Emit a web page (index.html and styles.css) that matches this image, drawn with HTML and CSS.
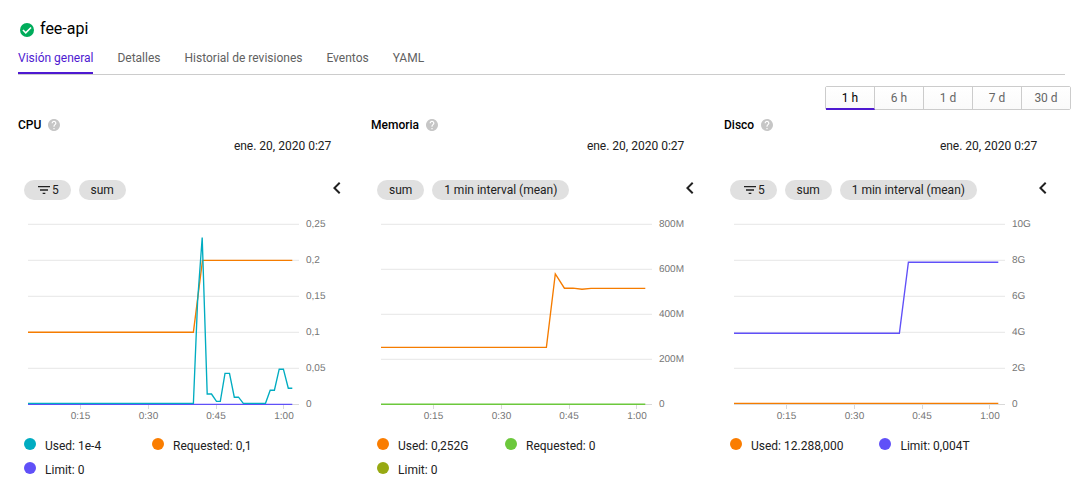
FILE: index.html
```html
<!DOCTYPE html>
<html lang="es">
<head>
<meta charset="utf-8">
<title>fee-api</title>
<link rel="stylesheet" href="styles.css">
</head>
<body>
<svg width="0" height="0" class="defs">
  <symbol id="help" viewBox="2 2 20 20"><path d="M12 2C6.48 2 2 6.48 2 12s4.48 10 10 10 10-4.48 10-10S17.52 2 12 2zm1 17h-2v-2h2v2zm2.07-7.75l-.9.92C13.45 12.9 13 13.5 13 15h-2v-.5c0-1.1.45-2.1 1.17-2.83l1.24-1.26c.37-.36.59-.86.59-1.41 0-1.1-.9-2-2-2s-2 .9-2 2H8c0-2.21 1.79-4 4-4s4 1.79 4 4c0 .88-.36 1.68-.93 2.25z"/></symbol>
  <symbol id="filter" viewBox="0 0 24 24"><path d="M10 18h4v-2h-4v2zM3 6v2h18V6H3zm3 7h12v-2H6v2z"/></symbol>
  <symbol id="chevron" viewBox="0 0 24 24"><path d="M15.41 7.41L14 6l-6 6 6 6 1.41-1.41L10.83 12z"/></symbol>
</svg>
<header class="header">
  <svg class="status" viewBox="2 2 20 20"><circle cx="12" cy="12" r="10" fill="#00ac5b"/><path d="M6.2 12l4 4 7.6-7.6" fill="none" stroke="#fff" stroke-width="2.2"/></svg>
  <h1 class="title">fee-api</h1>
</header>
<nav class="tabs">
  <a class="tab tab-active">Visión general</a>
  <a class="tab">Detalles</a>
  <a class="tab">Historial de revisiones</a>
  <a class="tab">Eventos</a>
  <a class="tab">YAML</a>
</nav>
<div class="ranges">
  <button class="range range-active">1 h</button>
  <button class="range">6 h</button>
  <button class="range">1 d</button>
  <button class="range">7 d</button>
  <button class="range">30 d</button>
</div>
<main class="panels">
  <section class="panel">
    <h2 class="heading">CPU <svg class="help"><use href="#help"/></svg></h2>
    <div class="date">ene. 20, 2020 0:27</div>
    <div class="controls">
      <span class="chip"><svg class="filter"><use href="#filter"/></svg>5</span>
      <span class="chip">sum</span>
      <svg class="chevron"><use href="#chevron"/></svg>
    </div>
    <svg class="chart" viewBox="18 214 340 214">
      <path class="grid" d="M28 224.3H299M28 260.3H299M28 296.3H299M28 332.3H299M28 368.3H299"/>
      <path class="axis" d="M28 404.5H299M80.5 405v4M148.5 405v4M216.5 405v4M283.5 405v4"/>
      <g class="labels"><text x="306" y="227">0,25</text><text x="306" y="263">0,2</text><text x="306" y="299">0,15</text><text x="306" y="335">0,1</text><text x="306" y="371">0,05</text><text x="306" y="407">0</text></g>
      <g class="labels times"><text x="80.5" y="419">0:15</text><text x="148.5" y="419">0:30</text><text x="216" y="419">0:45</text><text x="284" y="419">1:00</text></g>
      <path class="line violet" d="M28 404.3H292.3"/>
      <path class="line orange" d="M28 332.2H193.4L202.5 260.3H292.3"/>
      <path class="line teal" d="M28 403.3H193.4L197.6 301L202.2 237.5L207.2 394H211.5L216.5 401.3H220.3L225 373.3H229.5L234.3 397.2H238.5L243.3 403.3H265.5L270.2 390.2H274.4L279.2 369.2H283.4L288.3 388.2H292.3"/>
    </svg>
    <div class="legend">
      <span class="item"><i class="dot teal-bg"></i>Used: 1e-4</span>
      <span class="item"><i class="dot orange-bg"></i>Requested: 0,1</span>
      <span class="item"><i class="dot violet-bg"></i>Limit: 0</span>
    </div>
  </section>
  <section class="panel">
    <h2 class="heading">Memoria <svg class="help"><use href="#help"/></svg></h2>
    <div class="date">ene. 20, 2020 0:27</div>
    <div class="controls">
      <span class="chip">sum</span>
      <span class="chip">1 min interval (mean)</span>
      <svg class="chevron"><use href="#chevron"/></svg>
    </div>
    <svg class="chart" viewBox="18 214 340 214">
      <path class="grid" d="M28 224.3H299M28 269.3H299M28 314.3H299M28 359.3H299"/>
      <path class="axis" d="M28 404.5H299M80.5 405v4M148.5 405v4M216.5 405v4M283.5 405v4"/>
      <g class="labels"><text x="306" y="227">800M</text><text x="306" y="272">600M</text><text x="306" y="317">400M</text><text x="306" y="362">200M</text><text x="306" y="407">0</text></g>
      <g class="labels times"><text x="80.5" y="419">0:15</text><text x="148.5" y="419">0:30</text><text x="216" y="419">0:45</text><text x="284" y="419">1:00</text></g>
      <path class="line green" d="M28 404.2H292.3"/>
      <path class="line orange" d="M28 347.3H193.4L202.3 274L211.4 288.2H220L229 289.2L238 288.3H292.3"/>
    </svg>
    <div class="legend">
      <span class="item"><i class="dot orange-bg"></i>Used: 0,252G</span>
      <span class="item"><i class="dot green-bg"></i>Requested: 0</span>
      <span class="item"><i class="dot olive-bg"></i>Limit: 0</span>
    </div>
  </section>
  <section class="panel">
    <h2 class="heading">Disco <svg class="help"><use href="#help"/></svg></h2>
    <div class="date">ene. 20, 2020 0:27</div>
    <div class="controls">
      <span class="chip"><svg class="filter"><use href="#filter"/></svg>5</span>
      <span class="chip">sum</span>
      <span class="chip">1 min interval (mean)</span>
      <svg class="chevron"><use href="#chevron"/></svg>
    </div>
    <svg class="chart" viewBox="18 214 340 214">
      <path class="grid" d="M28 224.3H299M28 260.3H299M28 296.3H299M28 332.3H299M28 368.3H299"/>
      <path class="axis" d="M28 404.5H299M80.5 405v4M148.5 405v4M216.5 405v4M283.5 405v4"/>
      <g class="labels"><text x="306" y="227">10G</text><text x="306" y="263">8G</text><text x="306" y="299">6G</text><text x="306" y="335">4G</text><text x="306" y="371">2G</text><text x="306" y="407">0</text></g>
      <g class="labels times"><text x="80.5" y="419">0:15</text><text x="148.5" y="419">0:30</text><text x="216" y="419">0:45</text><text x="284" y="419">1:00</text></g>
      <path class="line violet" d="M28 333.2H193.4L202.4 262.2H292.3"/>
      <path class="line orange" d="M28 403.4H292.3"/>
    </svg>
    <div class="legend">
      <span class="item"><i class="dot orange-bg"></i>Used: 12.288,000</span>
      <span class="item"><i class="dot violet-bg"></i>Limit: 0,004T</span>
    </div>
  </section>
</main>
</body>
</html>
```

FILE: styles.css
```css
* { box-sizing: border-box; }
body { margin: 0; background: #fff; color: #212121; font: 12px/16px Roboto, sans-serif; overflow: hidden; }
svg { display: block; flex: none; }
.defs { position: absolute; }
.header { display: flex; gap: 6px; padding: 19px 0 0 20px; height: 48px; }
.status { width: 14px; height: 14px; margin-top: 4px; }
.title { margin: 0; font-size: 16px; line-height: 20px; font-weight: 400; color: #000; }
.tabs { display: flex; gap: 24px; height: 27px; margin: 0 14px 0 18px; border-bottom: 1px solid #ccc; }
.tab { height: 26px; padding-top: 2px; color: #616161; white-space: nowrap; }
.tab-active { width: 75.4px; color: #4e19d1; border-bottom: 2px solid #4e19d1; }
.ranges { display: flex; width: 246px; height: 24px; margin: 11px 8px 0 auto; border: 1px solid #ccc; border-radius: 2px; }
.range { flex: 1 1 0; height: 22px; padding: 0 0 1px; border: 0; border-right: 1px solid #ccc; background: linear-gradient(#fff, #fafafa); color: #666; font: 12px/20px Roboto, sans-serif; }
.range:last-child { border-right: 0; }
.range-active { height: 23px; padding-bottom: 0; border-bottom: 2px solid #4e19d1; color: #000; }
.panels { display: flex; margin: 7px 0 0 18px; }
.panel { flex: none; width: 353px; }
.heading { display: flex; align-items: center; gap: 7px; height: 16px; margin: 0; font-size: 12px; font-weight: 500; color: #000; }
.help { width: 12px; height: 12px; fill: #c6c6c6; }
.date { width: 313.3px; margin-top: 5px; text-align: right; }
.controls { display: flex; gap: 8px; width: 331px; margin-top: 26px; padding-left: 6px; }
.chip { display: flex; align-items: center; height: 20px; padding: 0 11.8px 0 12px; border-radius: 10px; background: #e0e0e0; white-space: nowrap; }
.filter { width: 16px; height: 16px; fill: #212121; }
.chevron { width: 24px; height: 24px; margin: -4px 0 0 auto; fill: #212121; }
.chart { width: 340px; height: 214px; margin-top: 14px; }
.grid { stroke: #ebebeb; stroke-width: 1.2; fill: none; }
.axis { stroke: #d9d9d9; fill: none; }
.labels { font: 10px "Liberation Sans", Arial, sans-serif; fill: #757575; text-rendering: geometricPrecision; }
.times { text-anchor: middle; }
.line { fill: none; stroke-width: 1.35; }
.teal { stroke: #00acc1; }
.orange { stroke: #f57c00; }
.violet { stroke: #6050f8; }
.green { stroke: #6cc83c; }
.legend { display: flex; flex-wrap: wrap; width: 330px; margin-top: 10px; padding-left: 6px; }
.item { display: flex; min-width: 128px; height: 24px; padding-right: 36px; gap: 9px; }
.dot { width: 12px; height: 12px; border-radius: 50%; }
.teal-bg { background: #00acc1; }
.orange-bg { background: #fa7d00; }
.violet-bg { background: #6050f8; }
.green-bg { background: #6cc83c; }
.olive-bg { background: #97a912; }
```
